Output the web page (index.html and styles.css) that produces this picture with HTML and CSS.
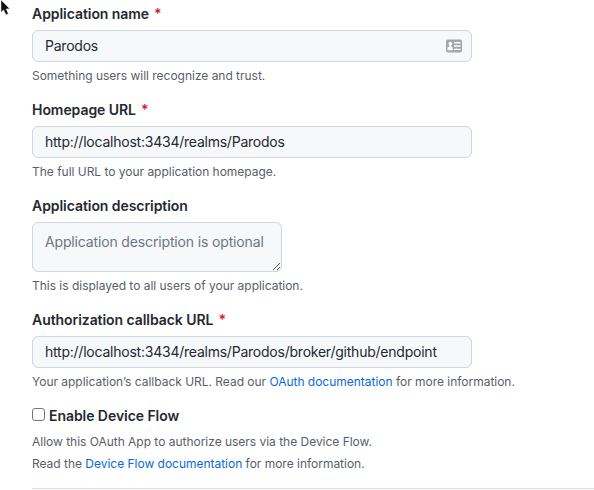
FILE: index.html
```html
<!DOCTYPE html>
<html lang="en">
<head>
<meta charset="utf-8">
<title>Register application</title>
<link rel="stylesheet" href="styles.css">
</head>
<body>
<svg class="cursor" width="14" height="18" viewBox="0 0 14 18"><path d="M1 0 L1 12.2 L3.6 9.9 L6 14.8 L8.3 13.7 L6.1 9 L9.7 8.7Z" fill="#111" stroke="#ddd" stroke-width=".5"/></svg>
<form class="form">
  <div class="group">
    <label class="label" for="name"><span>Application name</span><span class="required">*</span></label>
    <div class="field">
      <input class="control" id="name" type="text" value="Parodos">
      <svg class="card-icon" width="18" height="16" viewBox="0 0 18 16"><rect x="1" y="1.5" width="16" height="13" rx="2" fill="#a5a5a5"/><circle cx="5.3" cy="5.6" r="1.8" fill="#fff"/><path d="M4.4 6h1.8v2.2l1.5 1.2v2.8H2.5V9.4l1.9-1.2zM9 4h6.5v1.4H9zM9 7.3h6.5v1.4H9zM9 10.7h6.5v1.4H9z" fill="#fff"/></svg>
    </div>
    <p class="hint">Something users will recognize and trust.</p>
  </div>
  <div class="group">
    <label class="label" for="home"><span>Homepage URL</span><span class="required">*</span></label>
    <input class="control" id="home" type="text" value="http://localhost:3434/realms/Parodos">
    <p class="hint">The full URL to your application homepage.</p>
  </div>
  <div class="group">
    <label class="label" for="desc"><span>Application description</span></label>
    <div class="area">
      <textarea class="control area-control" id="desc" placeholder="Application description is optional"></textarea>
      <svg class="grip" width="9" height="9" viewBox="0 0 9 9"><path d="M1 8 8 1M5 8 8 5" stroke="#555" fill="none"/></svg>
    </div>
    <p class="hint">This is displayed to all users of your application.</p>
  </div>
  <div class="group">
    <label class="label" for="callback"><span>Authorization callback URL</span><span class="required">*</span></label>
    <input class="control" id="callback" type="text" value="http://localhost:3434/realms/Parodos/broker/github/endpoint">
    <p class="hint">Your application’s callback URL. Read our <a href="#">OAuth documentation</a> for more information.</p>
  </div>
  <div class="device">
    <label class="label check"><input class="box" type="checkbox"><span>Enable Device Flow</span></label>
    <p class="hint">Allow this OAuth App to authorize users via the Device Flow.</p>
    <p class="hint">Read the <a href="#">Device Flow documentation</a> for more information.</p>
  </div>
  <hr class="rule">
</form>
</body>
</html>
```

FILE: styles.css
```css
* { box-sizing: border-box; }
body {
  margin: 0;
  height: 490px;
  overflow: hidden;
  background: #fff;
  color: #24292f;
  font-family: Inter, "Liberation Sans", sans-serif;
}
.cursor { position: absolute; left: 0; top: 0; }
.form { padding: 4px 0 0 32px; }
.group { margin-bottom: 16px; }
.label {
  display: flex;
  height: 20px;
  margin-bottom: 6px;
  font-size: 14px;
  font-weight: 600;
  line-height: 20px;
  letter-spacing: -0.06px;
}
.required { margin-left: 5px; color: #cf222e; }
.field { position: relative; width: 440px; }
.control {
  display: block;
  width: 440px;
  height: 32px;
  margin: 0;
  padding: 0 12px 2px;
  border: 1px solid #d0d7de;
  border-radius: 6px;
  background: #f6f8fa;
  color: #24292f;
  font: 14px/20px Inter, "Liberation Sans", sans-serif;
  letter-spacing: -0.23px;
  outline: 0;
}
.card-icon { position: absolute; right: 9px; top: 8px; }
.area { position: relative; width: 250px; }
.area-control {
  width: 250px;
  height: 50px;
  padding: 9px 12px;
  letter-spacing: -0.15px;
  resize: none;
  overflow: hidden;
}
.area-control::placeholder { color: #6e7781; }
.grip { position: absolute; right: 1px; bottom: 1px; }
.hint {
  height: 18px;
  margin: 4px 0 0;
  padding-top: 1px;
  color: #57606a;
  font-size: 12px;
  line-height: 18px;
  letter-spacing: -0.02px;
  white-space: nowrap;
}
.hint a { color: #0969da; text-decoration: none; }
.check { align-items: center; margin-bottom: 0; }
.box {
  appearance: none;
  width: 13px;
  height: 13px;
  margin: 0 4px 4px 0;
  border: 1px solid #767676;
  border-radius: 3px;
  background: #fff;
}
.device .check + .hint { margin-top: 6px; }
.rule {
  height: 1px;
  margin: 16px 0 0;
  border: 0;
  background: #d8dee4;
}
```
